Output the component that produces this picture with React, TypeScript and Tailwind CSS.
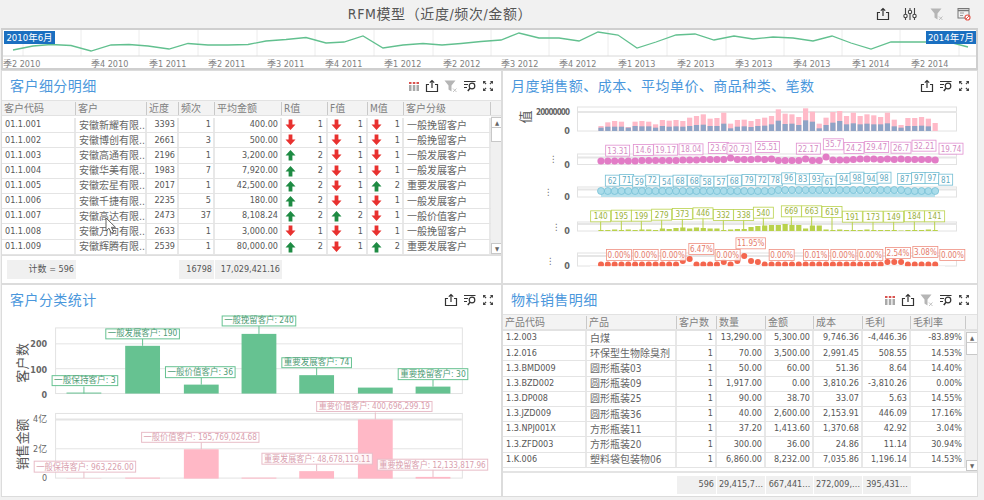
import type { ReactNode } from "react";

const linePts =
  "12,50 32,46 50,44.5 70,45.5 90,51 110,45 128,44.5 147,46 168,49 187,43.5 207,45 227,45 247,44.5 265,41 285,39.5 305,37.5 325,43 343,42 362,36 382,48 402,45 422,43.5 441,45 460,43.5 480,41.5 500,40 518,33 538,38 558,38 578,41 597,32 617,35 636,48 655,42 675,35 694,34 713,40 733,36 752,39 772,37 792,38 812,41 831,36 850,43 870,49 890,42 910,42 928,42 948,42 967,47";
const gridX = [22, 80, 138, 197, 256, 314, 373, 432, 490, 548, 607, 666, 725, 783, 841, 899, 958];
const quarterLabels: [number, string][] = [
  [2, "季2 2010"], [90, "季4 2010"], [148, "季1 2011"], [207, "季2 2011"], [266, "季3 2011"], [324, "季4 2011"],
  [383, "季1 2012"], [442, "季2 2012"], [500, "季3 2012"], [558, "季4 2012"], [617, "季1 2013"], [676, "季2 2013"],
  [734, "季3 2013"], [792, "季4 2013"], [851, "季1 2014"], [910, "季2 2014"],
];

function IconExport() {
  return (
    <svg width="14" height="14" viewBox="0 0 14 14" fill="none" stroke="#333" strokeWidth="1.2">
      <path d="M4 5.5H1.5V12.5H12.5V5.5H10" />
      <path d="M7 9V1.5M4.8 3.7L7 1.5L9.2 3.7" />
    </svg>
  );
}
function IconColumns() {
  return (
    <svg width="12" height="12" viewBox="0 0 12 12">
      <path d="M1 2h2.5v2H1zM4.8 2h2.5v2H4.8zM8.5 2H11v2H8.5z" fill="#d9534f" />
      <path d="M1 5h2.5v6H1zM4.8 5h2.5v6H4.8zM8.5 5H11v6H8.5z" fill="#a9a9a9" />
    </svg>
  );
}
function IconFilter() {
  return (
    <svg width="14" height="14" viewBox="0 0 14 14">
      <path d="M0.5 1.5H11.5L7.5 6.5V12.5L4.5 10.5V6.5Z" fill="#b5b5b5" />
      <path d="M9 9.5L12.5 13M12.5 9.5L9 13" stroke="#b5b5b5" strokeWidth="0.8" />
    </svg>
  );
}
function IconSearch() {
  return (
    <svg width="14" height="14" viewBox="0 0 14 14" fill="none" stroke="#333" strokeWidth="1.2">
      <path d="M1 2.5H12.5M1 5.5H5M1 8.5H4" />
      <circle cx="9" cy="7" r="2.8" />
      <path d="M7 9.2L4.8 12" strokeWidth="1.5" />
    </svg>
  );
}
function IconExpand() {
  return (
    <svg width="12" height="12" viewBox="0 0 12 12" fill="#444">
      <path d="M1 1h3L3 2.2 4.5 3.6 3.6 4.5 2.2 3 1 4z" />
      <path d="M11 1H8l1 1.2L7.5 3.6l.9.9L9.8 3 11 4z" />
      <path d="M1 11h3L3 9.8l1.5-1.4-.9-.9L2.2 9 1 8z" />
      <path d="M11 11H8l1-1.2-1.5-1.4.9-.9L9.8 9 11 8z" />
    </svg>
  );
}
function IconSliders() {
  return (
    <svg width="14" height="14" viewBox="0 0 14 14" fill="none" stroke="#444" strokeWidth="1.1">
      <path d="M2.5 1v12M7 1v12M11.5 1v12" />
      <circle cx="2.5" cy="9" r="1.7" fill="#fff" />
      <circle cx="7" cy="5" r="1.7" fill="#fff" />
      <circle cx="11.5" cy="9" r="1.7" fill="#fff" />
    </svg>
  );
}
function IconCalendar() {
  return (
    <svg width="14" height="14" viewBox="0 0 14 14" fill="none">
      <rect x="1" y="1.5" width="11" height="9.5" stroke="#777" />
      <path d="M1 3.5H12" stroke="#777" strokeWidth="1.5" />
      <path d="M3 6H7M3 8.5H6" stroke="#999" />
      <circle cx="10.5" cy="10.5" r="2.5" fill="#fff" stroke="#e2574c" strokeWidth="1.2" />
      <path d="M9 12L12 9" stroke="#e2574c" />
    </svg>
  );
}

function Arrow({ up }: { up: boolean }) {
  return (
    <svg width="11" height="12" viewBox="0 0 11 12" className="shrink-0">
      {up ? (
        <path d="M5.5 1L10.5 6.5H7.4V11.5H3.6V6.5H0.5Z" fill="#1e8b43" />
      ) : (
        <path d="M5.5 11L10.5 5.5H7.4V0.5H3.6V5.5H0.5Z" fill="#e8312f" />
      )}
    </svg>
  );
}

function Panel({ title, icons, children }: { title: string; icons: ReactNode; children: ReactNode }) {
  return (
    <section className="flex flex-col bg-white border border-[#dcdcdc] overflow-hidden">
      <div className="h-[29px] shrink-0 flex items-center justify-between pl-[8px] pr-[7px]">
        <h2 className="text-[14px] tracking-[0.45px] font-normal text-[#4a97dc] leading-none">{title}</h2>
        <div className="flex items-center gap-[5px]">{icons}</div>
      </div>
      {children}
    </section>
  );
}

function ScrollBar({ thumbTop }: { thumbTop: string }) {
  return (
    <div className="w-[12px] shrink-0 bg-[#f0f0f0] flex flex-col pt-[1px]">
      <div className="h-[11px] bg-white border border-[#c8c8c8] flex items-center justify-center text-[6px] leading-none text-[#666]">▲</div>
      <div className={`${thumbTop} bg-white border border-[#c8c8c8] border-t-0`} />
      <div className="mt-auto h-[11px] bg-white border border-[#c8c8c8] flex items-center justify-center text-[6px] leading-none text-[#666]">▼</div>
    </div>
  );
}

type Seg = [boolean, number];
const customers: [string, string, string, string, string, Seg, Seg, Seg, string][] = [
  ["01.1.001", "安徽新耀有限…", "3393", "1", "400.00", [false, 1], [false, 1], [false, 1], "一般挽留客户"],
  ["01.1.002", "安徽博创有限…", "2661", "3", "500.00", [false, 1], [false, 1], [false, 1], "一般挽留客户"],
  ["01.1.003", "安徽高通有限…", "2196", "1", "3,200.00", [true, 2], [false, 1], [false, 1], "一般发展客户"],
  ["01.1.004", "安徽华美有限…", "1983", "7", "7,920.00", [true, 2], [false, 1], [false, 1], "一般发展客户"],
  ["01.1.005", "安徽宏星有限…", "2017", "1", "42,500.00", [true, 2], [false, 1], [true, 2], "重要发展客户"],
  ["01.1.006", "安徽千捷有限…", "2235", "5", "180.00", [true, 2], [false, 1], [false, 1], "一般发展客户"],
  ["01.1.007", "安徽高达有限…", "2473", "37", "8,108.24", [true, 2], [true, 2], [false, 1], "一般价值客户"],
  ["01.1.008", "安徽万向有限…", "2633", "1", "3,000.00", [false, 1], [false, 1], [false, 1], "一般挽留客户"],
  ["01.1.009", "安徽辉腾有限…", "2539", "1", "80,000.00", [true, 2], [false, 1], [true, 2], "重要发展客户"],
];

const products = [
  ["1.2.003", "白煤", "1", "13,290.00", "5,300.00", "9,746.36", "-4,446.36", "-83.89%"],
  ["1.2.016", "环保型生物除臭剂", "1", "70.00", "3,500.00", "2,991.45", "508.55", "14.53%"],
  ["1.3.BMD009", "圆形瓶装03", "1", "50.00", "60.00", "51.36", "8.64", "14.40%"],
  ["1.3.BZD002", "圆形瓶装09", "1", "1,917.00", "0.00", "3,810.26", "-3,810.26", "0.00%"],
  ["1.3.DP008", "圆形瓶装25", "1", "90.00", "38.70", "33.07", "5.63", "14.55%"],
  ["1.3.JZD009", "圆形瓶装36", "1", "40.00", "2,600.00", "2,153.91", "446.09", "17.16%"],
  ["1.3.NPJ001X", "方形瓶装11", "1", "37.20", "1,413.60", "1,370.68", "42.92", "3.04%"],
  ["1.3.ZFD003", "方形瓶装20", "1", "300.00", "36.00", "24.86", "11.14", "30.94%"],
  ["1.K.006", "塑料袋包装物06", "1", "6,860.00", "8,232.00", "7,035.86", "1,196.14", "14.53%"],
];

const leftCols = "grid-cols-[74px_71px_32px_36px_67px_46px_40px_36px_87px]";
const rightCols = "grid-cols-[84px_90px_40px_49px_48px_49px_48px_55px]";

function HeadCell({ children }: { children?: ReactNode }) {
  return (
    <div className="h-full flex items-center pl-[2px] text-[10px] text-[#808080] relative after:absolute after:right-0 after:top-[1px] after:bottom-[1px] after:w-[1px] after:bg-[#c9c9c9]">
      {children}
    </div>
  );
}

function Cell({ children, right, cjk }: { children: ReactNode; right?: boolean; cjk?: boolean }) {
  return (
    <div
      className={`h-full flex items-center border-r-2 border-[#e8e8e8] overflow-hidden whitespace-nowrap ${
        right ? "justify-end pr-[2px]" : "pl-[3px]"
      } ${cjk ? "text-[10px] text-[#666]" : "text-[9px]"}`}
    >
      {children}
    </div>
  );
}

function ArrowCell({ seg, pad }: { seg: Seg; pad: string }) {
  return (
    <div className={`h-full flex items-center justify-between pl-[3px] ${pad} border-r-2 border-[#e8e8e8] text-[9px]`}>
      <Arrow up={seg[0]} />
      {seg[1]}
    </div>
  );
}

function CustomerTable() {
  return (
    <div className="flex-1 flex flex-col min-h-0 text-[#565656] relative">
      <div className="h-[16px] shrink-0 flex bg-[#f3f3f3] border-y border-[#e2e2e2]">
        <div className={`grid ${leftCols} w-[489px] h-full`}>
          {["客户代码", "客户", "近度", "频次", "平均金额", "R值", "F值", "M值", "客户分级"].map((h) => (
            <HeadCell key={h}>{h}</HeadCell>
          ))}
        </div>
      </div>
      <div className="h-[140px] shrink-0 flex border-b-2 border-[#dedede]">
        <div className="w-[489px] pt-[2px]">
          {customers.map((r) => (
            <div key={r[0]} className={`grid ${leftCols} h-[15.2px] border-b border-[#e4e4e4]`}>
              <Cell>{r[0]}</Cell>
              <Cell cjk>{r[1]}</Cell>
              <Cell right>{r[2]}</Cell>
              <Cell right>{r[3]}</Cell>
              <Cell right>{r[4]}</Cell>
              <ArrowCell seg={r[5]} pad="pr-[3px]" />
              <ArrowCell seg={r[6]} pad="pr-[3px]" />
              <ArrowCell seg={r[7]} pad="pr-[2px]" />
              <Cell cjk>{r[8]}</Cell>
            </div>
          ))}
        </div>
        <ScrollBar thumbTop="h-[14px]" />
      </div>
      <div className={`grid ${leftCols} w-[489px] h-[19px] mt-[4px] text-[9px]`}>
        <div className="ml-[5px] bg-[#f0f0f0] flex items-center justify-end pr-[2px]">计数 = 596</div>
        <div className="col-span-2" />
        <div className="col-start-4 bg-[#f0f0f0] flex items-center justify-end pr-[2px] mr-[1px]">16798</div>
        <div className="bg-[#f0f0f0] flex items-center justify-end pr-[2px]">17,029,421.16</div>
      </div>
      <svg width="14" height="18" viewBox="0 0 14 18" className="absolute left-[102px] top-[117px]">
        <path d="M2 1V14L5 11.2L7.2 16L9.6 15L7.4 10.3H11.5Z" fill="#fff" stroke="#555" strokeWidth="0.9" />
      </svg>
    </div>
  );
}

function ProductTable() {
  return (
    <div className="flex-1 flex flex-col min-h-0 text-[#565656]">
      <div className="h-[17px] shrink-0 flex bg-[#f3f3f3] border-y border-[#e2e2e2] border-b-2">
        <div className={`grid ${rightCols} w-[463px] h-full`}>
          {["产品代码", "产品", "客户数", "数量", "金额", "成本", "毛利", "毛利率"].map((h) => (
            <HeadCell key={h}>{h}</HeadCell>
          ))}
        </div>
      </div>
      <div className="h-[142px] shrink-0 flex border-b-2 border-[#e4e4e4]">
        <div className="w-[463px]">
          {products.map((r) => (
            <div key={r[0]} className={`grid ${rightCols} h-[15.2px] border-b border-[#e4e4e4]`}>
              <Cell>{r[0]}</Cell>
              <Cell cjk>{r[1]}</Cell>
              {r.slice(2).map((v, i) => (
                <Cell key={i} right>{v}</Cell>
              ))}
            </div>
          ))}
        </div>
        <ScrollBar thumbTop="h-[12px]" />
      </div>
      <div className={`grid ${rightCols} w-[463px] h-[18px] mt-[3px] text-[9px]`}>
        <div className="col-start-3 bg-[#f0f0f0] flex items-center justify-end pr-[2px] mr-[1px]">596</div>
        <div className="bg-[#f0f0f0] flex items-center justify-center mr-[1px]">29,415,7…</div>
        <div className="bg-[#f0f0f0] flex items-center justify-center mr-[1px]">667,441…</div>
        <div className="bg-[#f0f0f0] flex items-center justify-center mr-[1px]">272,009,…</div>
        <div className="bg-[#f0f0f0] flex items-center justify-center">395,431…</div>
      </div>
    </div>
  );
}

function Tag({ x, y, text, color, ink, w }: { x: number; y: number; text: string; color: string; ink: string; w?: number }) {
  const width = w ?? text.length * 4 + 4;
  return (
    <g>
      <rect x={x - width / 2} y={y - 5.5} width={width} height={11} fill="#fff" fillOpacity="0.85" stroke={color} strokeWidth="0.8" />
      <text x={x} y={y + 3} textAnchor="middle" fontSize="8" fill={ink}>{text}</text>
    </g>
  );
}

const dx = (i: number) => 601 + i * 6.82;
const zx = (z: number) => 505 + z / 3;
const zy = (z: number) => 100 + z / 3;

const pink = [15,26,30,28,12,28,30,28,20,33,31,33,30,40,45,50,37,39,55,22,33,34,30,36,40,45,65,52,50,42,68,58,22,40,57,60,45,55,45,50,47,42,55,34,18,39,39,42,37,24];
const blue = [10,13,13,13,10,15,14,14,10,15,13,14,13,15,18,19,15,15,22,8,13,14,12,15,16,20,31,21,22,18,32,28,8,18,25,30,20,23,20,22,20,20,23,14,10,15,15,16,14,0];
const olive = [1,1,1.5,1,1.5,1,1.5,1.5,1,2.5,2,3,3.5,2.5,3.5,3,2.5,2.5,1,1.5,2,2,4,5,5.5,6,6,7,6,6,2.5,5.5,5.5,1.5,1,1.5,1,1,1,1.5,1,1,1,1,0.5,1,1,1,1.5,1];
const priceY = [161,161,161,161,161,161,160.5,160.5,160.5,160.5,160.5,160.5,160,160,160,159.5,159.5,159.5,159.5,158,159.5,159.5,159.5,159,159.5,159,160.5,160.5,160.5,160.5,159,160.5,160.5,157,160,160,160,159.5,159,159,159,159.5,159,159.5,159,159.5,159.5,159.5,159.5,160];
const redY: Record<number, number> = { 12: 261, 13: 259, 18: 262, 20: 261, 21: 256, 22: 261, 23: 262, 42: 262, 43: 262, 44: 262 };

const priceTags: [number, number, string][] = [[338,152,"13.31"],[415,150,"14.6"],[482,149,"19.17"],[558,148,"18.04"],[640,144,"23.6"],[702,146,"20.73"],[787,141,"25.51"],[910,146,"22.17"],[985,133,"35.7"],[1047,144,"24.2"],[1115,141,"29.47"],[1188,143,"26.7"],[1257,137,"32.21"],[1338,146,"19.74"]];
const kindTags: [number, number, string][] = [[322,242,"62"],[365,240,"71"],[403,245,"59"],[442,241,"72"],[485,245,"54"],[525,242,"68"],[568,242,"68"],[606,245,"58"],[648,245,"57"],[688,242,"68"],[732,240,"79"],[772,241,"72"],[811,241,"78"],[851,235,"96"],[893,238,"83"],[934,237,"93"],[972,245,"61"],[1016,237,"94"],[1056,233,"98"],[1098,237,"94"],[1137,233,"98"],[1199,237,"87"],[1241,234,"97"],[1281,234,"97"],[1322,239,"81"]];
const countTags: [number, number, string][] = [[287,349,"140"],[349,347,"195"],[409,347,"199"],[470,344,"279"],[532,342,"373"],[594,340,"446"],[655,345,"332"],[716,345,"338"],[775,338,"540"],[859,334,"669"],[920,334,"663"],[981,336,"619"],[1042,350,"191"],[1104,350,"173"],[1166,350,"149"],[1228,349,"184"],[1289,349,"141"]];
const marginTags: [number, number, string][] = [[342,465,"0.00%"],[422,465,"0.00%"],[505,465,"0.00%"],[589,447,"6.47%"],[668,465,"0.00%"],[737,430,"11.95%"],[830,465,"0.00%"],[933,465,"0.01%"],[1015,465,"0.00%"],[1096,465,"0.00%"],[1179,459,"2.54%"],[1261,456,"3.08%"],[1342,465,"0.00%"]];

function Box({ y, h }: { y: number; h: number }) {
  return <rect x="577.5" y={y} width="379" height={h} fill="none" stroke="#e2e2e2" />;
}

function MonthlyChart() {
  return (
    <svg width="474" height="183" viewBox="503 100 474 183" className="block">
      <text transform="translate(530 117) rotate(-90)" fontSize="13" fill="#555" textAnchor="middle">值</text>
      <Box y={107} h={24} />
      <path d="M578 112H957" stroke="#e6e6e6" strokeWidth="2" />
      <text x="570" y="115" fontSize="8" fontWeight="700" textAnchor="end" fill="#666" textLength="34">20000000</text>
      <text x="570" y="134" fontSize="9" fontWeight="700" textAnchor="end" fill="#666">0</text>
      {pink.map((h, i) => (
        <g key={i}>
          <rect x={dx(i) - 2.6} y={131 - h / 3} width="5.2" height={h / 3} fill="#ffbac8" />
          <rect x={dx(i) - 2.6} y={131 - blue[i] / 3} width="5.2" height={blue[i] / 3} fill="#8fa4c6" />
        </g>
      ))}

      <Box y={154} h={10.5} />
      <path d="M578 157.5H957" stroke="#e6e6e6" strokeWidth="2" />
      <text x="553" y="162" fontSize="9" textAnchor="middle" fill="#666">⋮</text>
      <text x="570" y="168" fontSize="9" fontWeight="700" textAnchor="end" fill="#666">0</text>
      {priceY.map((y, i) => <circle key={i} cx={dx(i)} cy={y} r="3.6" fill="#e27cc6" />)}
      {priceTags.map(([x, y, t]) => <Tag key={x} x={zx(x)} y={zy(y)} text={t} color="#e08fcf" ink="#d58cc5" />)}

      <Box y={187} h={10} />
      <path d="M578 189.5H957" stroke="#e6e6e6" strokeWidth="2" />
      <text x="548" y="195" fontSize="9" textAnchor="middle" fill="#666">⋮</text>
      <text x="570" y="200" fontSize="9" fontWeight="700" textAnchor="end" fill="#666">0</text>
      <rect x="601" y="193" width="334" height="4" fill="#b5e0ec" />
      {pink.map((_, i) => (
        <circle key={i} cx={dx(i)} cy={191 - (i > 25 && i < 45 ? 1 : 0)} r="3.5" fill="#a9dcea" stroke="#6fbcd2" strokeWidth="0.7" />
      ))}
      {kindTags.map(([x, y, t]) => <Tag key={x} x={zx(x)} y={zy(y)} text={t} color="#72bdd3" ink="#5fa9c0" w={14} />)}

      <Box y={222} h={9} />
      <path d="M578 224H957" stroke="#e6e6e6" strokeWidth="2" />
      <text x="556" y="230" fontSize="9" textAnchor="middle" fill="#666">⋮</text>
      <text x="570" y="234" fontSize="9" fontWeight="700" textAnchor="end" fill="#666">0</text>
      {olive.map((h, i) => <rect key={i} x={dx(i) - 2.6} y={231 - h} width="5.2" height={h} fill="#b9d24b" />)}
      {countTags.map(([x, y, t]) => (
        <g key={x}>
          <path d={`M${zx(x)} ${zy(y)}V231`} stroke="#b9d24b" />
          <Tag x={zx(x)} y={zy(y)} text={t} color="#b9d24b" ink="#9cb23c" w={20} />
        </g>
      ))}

      <Box y={253} h={13} />
      <path d="M578 256H957" stroke="#e6e6e6" strokeWidth="2" />
      <text x="550" y="264" fontSize="9" textAnchor="middle" fill="#666">⋮</text>
      <text x="570" y="269" fontSize="9" fontWeight="700" textAnchor="end" fill="#666">0</text>
      {pink.map((_, i) => <circle key={i} cx={dx(i)} cy={redY[i] ?? 264.5} r="3" fill="#f4664e" />)}
      <rect x="590" y="266.2" width="355" height="4" fill="#fff" />
      {marginTags.map(([x, y, t]) => <Tag key={x} x={zx(x)} y={zy(y)} text={t} color="#ef8f80" ink="#e57b6b" w={t.length * 4.4 + 3} />)}
    </svg>
  );
}

const cx = [83, 142, 201, 259, 317, 376, 434];
const countBars = [1, 48, 9, 60, 18.5, 6, 7];
const amountBars = [0.3, 1, 29.5, 1, 7.5, 59.5, 1.7];

function CenterTag({ x1, x2, y1, y2, text, color, ink }: { x1: number; x2: number; y1: number; y2: number; text: string; color: string; ink: string }) {
  return (
    <g>
      <rect x={x1} y={y1} width={x2 - x1} height={y2 - y1} fill="#fff" fillOpacity="0.85" stroke={color} />
      <text
        x={(x1 + x2) / 2}
        y={y2 - 2.5}
        textAnchor="middle"
        fontSize="9"
        fill={ink}
        textLength={x2 - x1 - 4}
        lengthAdjust="spacingAndGlyphs"
      >
        {text}
      </text>
    </g>
  );
}

function ClassChart() {
  const green = "#66c291";
  const rose = "#e8bcc7";
  return (
    <svg width="500" height="183" viewBox="2 314 500 183" className="block">
      <rect x="54.5" y="328" width="409" height="66" fill="none" stroke="#e2e2e2" />
      <path d="M54 344H463M54 369H463" stroke="#e4e4e4" />
      {[["200", 347], ["100", 373], ["0", 398]].map(([t, y]) => (
        <text key={t} x="46" y={y} fontSize="9" fontWeight="700" textAnchor="end" fill="#666">{t}</text>
      ))}
      <text transform="translate(26 363) rotate(-90)" textAnchor="middle" fontSize="13" letterSpacing="0.5" fill="#555">客户数</text>
      {countBars.map((h, i) => <rect key={i} x={cx[i] - 17.5} y={394 - h} width="35" height={h} fill={green} />)}
      <path d="M83 387V394M142 339V346M201 378V385M259 326V334M317 368V376M434 380V387" stroke={green} />
      <CenterTag x1={51} x2={117} y1={376} y2={386} text="一般保持客户: 3" color={green} ink="#4f9c76" />
      <CenterTag x1={105} x2={179} y1={329} y2={339} text="一般发展客户: 190" color={green} ink="#4f9c76" />
      <CenterTag x1={165} x2={235} y1={367} y2={378} text="一般价值客户: 36" color={green} ink="#4f9c76" />
      <CenterTag x1={222} x2={296} y1={316} y2={326} text="一般挽留客户: 240" color={green} ink="#4f9c76" />
      <CenterTag x1={282} x2={352} y1={358} y2={368} text="重要发展客户: 74" color={green} ink="#4f9c76" />
      <CenterTag x1={399} x2={469} y1={369} y2={380} text="重要挽留客户: 30" color={green} ink="#4f9c76" />

      <rect x="54.5" y="414" width="409" height="65" fill="none" stroke="#e2e2e2" />
      <path d="M54 420H463" stroke="#e4e4e4" strokeWidth="2" />
      <path d="M54 449.5H463" stroke="#e4e4e4" />
      {[["4亿", 423], ["2亿", 453], ["0", 482]].map(([t, y]) => (
        <text key={t} x="46" y={y} fontSize="9" textAnchor="end" fill="#666">{t}</text>
      ))}
      <text transform="translate(26 445) rotate(-90)" textAnchor="middle" fontSize="13" fill="#555">销售金额</text>
      {amountBars.map((h, i) => <rect key={i} x={cx[i] - 17.5} y={479.5 - h} width="35" height={h} fill="#ffb8c6" />)}
      <path d="M83 472V479M201 443V450M317 465V472M376 413V420M434 470V478" stroke={rose} />
      <CenterTag x1={33} x2={135} y1={462} y2={473} text="一般保持客户: 963,226.00" color={rose} ink="#d9a0ae" />
      <CenterTag x1={141} x2={259} y1={433} y2={443} text="一般价值客户: 195,769,024.68" color={rose} ink="#d9a0ae" />
      <CenterTag x1={262} x2={373} y1={454} y2={465} text="重要发展客户: 48,678,119.11" color={rose} ink="#d9a0ae" />
      <CenterTag x1={317} x2={433} y1={402} y2={412} text="重要价值客户: 400,696,299.19" color={rose} ink="#d9a0ae" />
      <CenterTag x1={378} x2={489} y1={460} y2={471} text="重要挽留客户: 12,133,817.96" color={rose} ink="#d9a0ae" />
    </svg>
  );
}

function TimeRange() {
  return (
    <div className="ml-[1px] w-[977px] h-[42px] border-2 border-[#cfcfcf] bg-white">
      <svg width="973" height="38" viewBox="2 30 973 38" className="block">
        {gridX.map((x) => <path key={x} d={`M${x} 30V56`} stroke="#ececec" />)}
        <path d="M2 56H976" stroke="#d8d8d8" />
        <polyline points={linePts} fill="none" stroke="#62c08f" strokeWidth="1.3" />
        {quarterLabels.map(([x, t]) => (
          <text key={t} x={x} y="67" fontSize="9" fill="#808080">{t}</text>
        ))}
        <rect x="3" y="31" width="51" height="13" fill="#1a6fc0" />
        <text x="28.5" y="41" textAnchor="middle" fontSize="9.5" fill="#fff">2010年6月</text>
        <rect x="925" y="31" width="50" height="13" fill="#1a6fc0" />
        <text x="950" y="41" textAnchor="middle" fontSize="9.5" fill="#fff">2014年7月</text>
      </svg>
    </div>
  );
}

export default function App() {
  return (
    <div className="w-[984px] h-[500px] overflow-hidden bg-[#f1f1f1] font-['DejaVu_Sans_Condensed','Liberation_Sans','Noto_Sans_CJK_SC',sans-serif]">
      <header className="h-[28px] flex items-center relative">
        <h1 className="w-full text-center pr-[104px] text-[14px] font-normal text-[#555] tracking-[0.6px]">RFM模型（近度/频次/金额）</h1>
        <div className="absolute right-[13px] top-[7px] flex items-center gap-[13px]">
          <IconExport />
          <IconSliders />
          <IconFilter />
          <IconCalendar />
        </div>
      </header>
      <TimeRange />
      <div className="ml-[1px] w-[977px] grid grid-cols-[501px_476px] grid-rows-[214px_213px]">
        <Panel
          title="客户细分明细"
          icons={<><IconColumns /><IconExport /><IconFilter /><IconSearch /><IconExpand /></>}
        >
          <CustomerTable />
        </Panel>
        <Panel title="月度销售额、成本、平均单价、商品种类、笔数" icons={<><IconExport /><IconSearch /><IconExpand /></>}>
          <MonthlyChart />
        </Panel>
        <Panel title="客户分类统计" icons={<><IconExport /><IconSearch /><IconExpand /></>}>
          <ClassChart />
        </Panel>
        <Panel
          title="物料销售明细"
          icons={<><IconColumns /><IconExport /><IconFilter /><IconSearch /><IconExpand /></>}
        >
          <ProductTable />
        </Panel>
      </div>
    </div>
  );
}
